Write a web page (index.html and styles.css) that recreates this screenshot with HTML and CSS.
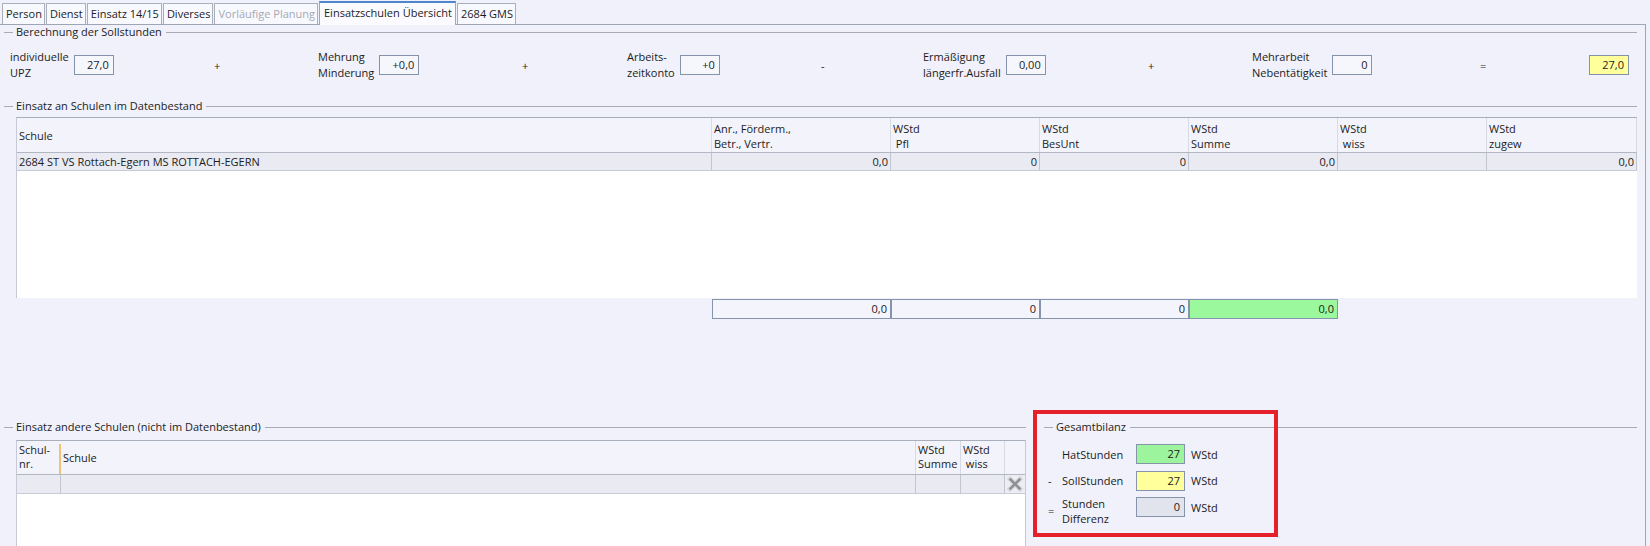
FILE: index.html
```html
<!DOCTYPE html>
<html lang="de">
<head>
<meta charset="utf-8">
<title>Einsatzschulen Übersicht</title>
<link rel="stylesheet" href="styles.css">
</head>
<body>
<div class="app">
  <div class="tabs">
    <div class="tab">Person</div>
    <div class="tab">Dienst</div>
    <div class="tab">Einsatz 14/15</div>
    <div class="tab">Diverses</div>
    <div class="tab disabled">Vorläufige Planung</div>
    <div class="tab active">Einsatzschulen Übersicht</div>
    <div class="tab">2684 GMS</div>
  </div>
  <div class="pane">
    <section class="group">
      <div class="legend"><span>Berechnung der Sollstunden</span></div>
      <div class="calc-row">
        <div class="term"><label>individuelle<br>UPZ</label><div class="field">27,0</div></div>
        <div class="op">+</div>
        <div class="term"><label>Mehrung<br>Minderung</label><div class="field">+0,0</div></div>
        <div class="op">+</div>
        <div class="term"><label>Arbeits-<br>zeitkonto</label><div class="field">+0</div></div>
        <div class="op">-</div>
        <div class="term"><label>Ermäßigung<br>längerfr.Ausfall</label><div class="field">0,00</div></div>
        <div class="op">+</div>
        <div class="term"><label>Mehrarbeit<br>Nebentätigkeit</label><div class="field">0</div></div>
        <div class="op">=</div>
        <div class="field yellow">27,0</div>
      </div>
    </section>

    <section class="group">
      <div class="legend"><span>Einsatz an Schulen im Datenbestand</span></div>
      <div class="table1">
        <div class="t1-head">
          <div class="mid">Schule</div>
          <div>Anr., Förderm.,<br>Betr., Vertr.</div>
          <div>WStd<br>&nbsp;Pfl</div>
          <div>WStd<br>BesUnt</div>
          <div>WStd<br>Summe</div>
          <div>WStd<br>&nbsp;wiss</div>
          <div>WStd<br>zugew</div>
        </div>
        <div class="t1-row">
          <div class="txt">2684 ST VS Rottach-Egern MS ROTTACH-EGERN</div>
          <div>0,0</div>
          <div>0</div>
          <div>0</div>
          <div>0,0</div>
          <div></div>
          <div>0,0</div>
        </div>
      </div>
      <div class="totals">
        <div class="blank"></div>
        <div class="tbox">0,0</div>
        <div class="tbox">0</div>
        <div class="tbox">0</div>
        <div class="tbox green">0,0</div>
      </div>
    </section>

    <div class="bottom">
      <section class="group other">
        <div class="legend"><span>Einsatz andere Schulen (nicht im Datenbestand)</span></div>
        <div class="table2">
          <div class="t2-head">
            <div>Schul-<br>nr.</div>
            <div class="divider"></div>
            <div class="mid">Schule</div>
            <div>WStd<br>Summe</div>
            <div>WStd<br>&nbsp;wiss</div>
            <div></div>
          </div>
          <div class="t2-row">
            <div></div>
            <div></div>
            <div></div>
            <div></div>
            <div class="del">
              <svg width="16" height="16" viewBox="0 0 16 16" aria-hidden="true">
                <path d="M3 3 L13 13 M13 3 L3 13" stroke="#d9dadf" stroke-width="5" stroke-linecap="square"/>
                <path d="M3.5 3.5 L12.5 12.5 M12.5 3.5 L3.5 12.5" stroke="#8f9095" stroke-width="2.6" stroke-linecap="square"/>
              </svg>
            </div>
          </div>
        </div>
      </section>

      <section class="group bilanz">
        <div class="legend"><span>Gesamtbilanz</span></div>
        <div class="bilanz-grid">
          <div class="bop"></div>
          <div class="blabel">HatStunden</div>
          <div class="bfield green">27</div>
          <div class="unit">WStd</div>

          <div class="bop">-</div>
          <div class="blabel">SollStunden</div>
          <div class="bfield yellow">27</div>
          <div class="unit">WStd</div>

          <div class="bop eq">=</div>
          <div class="blabel two">Stunden<br>Differenz</div>
          <div class="bfield grey">0</div>
          <div class="unit">WStd</div>
        </div>
      </section>
    </div>
  </div>
  <div class="highlight"></div>
</div>
</body>
</html>
```

FILE: styles.css
```css
* { box-sizing: border-box; }

html, body {
  margin: 0;
  height: 546px;
  overflow: hidden;
}

body {
  background: #f0f1fa;
  font-family: "Open Sans", "Noto Sans", "DejaVu Sans", sans-serif;
  font-size: 11px;
  color: #1c1c1c;
}

.app {
  position: relative;
  width: 1650px;
  height: 546px;
}

/* Tabs */
.tabs {
  display: flex;
  align-items: flex-end;
  gap: 1px;
  height: 24px;
  padding: 0 0 0 2px;
}

.tab {
  height: 21px;
  padding: 0 2px 0 3px;
  border: 1px solid #a9aebb;
  border-bottom: none;
  background: #f8f9fe;
  line-height: 19px;
  white-space: nowrap;
}

.tab.disabled { color: #a6a8b2; }

.tab.active {
  height: 24px;
  margin-bottom: -1px;
  padding: 0 3px 0 4px;
  background: #fbfbff;
  border-color: #9ca7bd;
  border-top: 2px solid #4f86cb;
  line-height: 20px;
  position: relative;
}

/* Pane */
.pane {
  width: 1646px;
  height: 522px;
  border-top: 1px solid #9ea6b6;
  border-right: 1px solid #9ea6b6;
  padding-right: 8px;
}

.legend {
  display: flex;
  align-items: center;
  height: 14px;
  line-height: 14px;
  padding-left: 4px;
  white-space: nowrap;
}

.legend::before {
  content: "";
  width: 9px;
  border-top: 1px solid #a6abb7;
  margin-right: 3px;
}

.legend::after {
  content: "";
  flex: 1;
  border-top: 1px solid #a6abb7;
  margin-left: 4px;
}

/* Berechnung */
.calc-row {
  display: grid;
  grid-template-columns: 206px 102px 206px 103px 196px 100px 227px 102px 230px 107px 40px;
  align-items: center;
  height: 36px;
  margin: 8px 0 16px;
  padding-left: 10px;
}

.term {
  display: flex;
  align-items: center;
  gap: 5px;
}

.term label { line-height: 16px; }

.op { margin-left: -2px; }

.field {
  width: 40px;
  height: 20px;
  border: 1px solid #8493a9;
  background: #f6f7fd;
  text-align: right;
  padding-right: 4px;
  line-height: 18px;
}

.field.yellow { background: #ffff9b; }

/* Table 1 */
.table1 {
  margin: 4px 0 0 16px;
  height: 181px;
  background: #ffffff;
  border-left: 1px solid #c6cad6;
  border-top: 1px solid #a9aebb;
}

.t1-head, .t1-row, .totals {
  display: grid;
  grid-template-columns: 695px 179px 149px 149px 149px 149px 1fr;
}

.t1-head {
  height: 34px;
  background: #f2f3fb;
}

.t1-head > div {
  padding: 3px 2px 0;
  line-height: 15px;
  border-right: 1px solid #d7dae3;
}

.t1-head > .mid {
  display: flex;
  align-items: center;
  padding-top: 0;
}

.t1-row {
  height: 19px;
  background: #e9eaf2;
  border-top: 1px solid #b3b7c3;
  border-bottom: 1px solid #c7cbd5;
}

.t1-row > div {
  border-right: 1px solid #c1c5cf;
  text-align: right;
  padding-right: 2px;
  line-height: 17px;
}

.t1-row > .txt {
  text-align: left;
  padding-left: 2px;
}

.totals {
  grid-template-columns: 696px 179px 149px 149px 149px;
  height: 20px;
  margin: 1px 0 0 16px;
}

.tbox {
  border: 1px solid #8594aa;
  background: #f3f4fc;
  text-align: right;
  padding-right: 3px;
  line-height: 18px;
}

.tbox.green { background: #9cf89c; }

/* Bottom */
.bottom {
  display: flex;
  margin-top: 101px;
}

.other { width: 1026px; }

.bilanz {
  flex: 1;
  margin-left: 14px;
}

.table2 {
  margin: 6px 0 0 16px;
  height: 120px;
  background: #ffffff;
  border-left: 1px solid #c6cad6;
  border-top: 1px solid #a9aebb;
  border-right: 1px solid #c6cad6;
}

.t2-head, .t2-row {
  display: grid;
  grid-template-columns: 42px 2px 855px 45px 44px 1fr;
}

.t2-row {
  grid-template-columns: 44px 855px 45px 44px 1fr;
}

.t2-head {
  height: 33px;
  background: #f2f3fb;
}

.t2-head > div {
  padding: 2px 2px 0;
  line-height: 14px;
  border-right: 1px solid #d7dae3;
}

.t2-head > div:first-child { border-right: none; }

.t2-head > div:last-child { border-right: none; }

.t2-head > .divider {
  padding: 0;
  margin-top: 3px;
  background: #f0c377;
  border: none;
}

.t2-head > .mid {
  display: flex;
  align-items: center;
  padding-top: 0;
}

.t2-row {
  height: 20px;
  background: #e9eaf2;
  border-top: 1px solid #b3b7c3;
  border-bottom: 1px solid #c7cbd5;
}

.t2-row > div { border-right: 1px solid #c1c5cf; }

.t2-row > .del {
  border-right: none;
  display: flex;
  align-items: center;
  justify-content: center;
  background: #eceef4;
}

/* Gesamtbilanz */
.bilanz-grid {
  display: grid;
  grid-template-columns: 16px 74px 49px auto;
  grid-auto-rows: 20px;
  row-gap: 6.5px;
  align-items: center;
  margin-top: 10px;
  padding-left: 6px;
}

.bop { padding-left: 2px; }

.bop.eq { padding-top: 6px; }

.blabel { white-space: nowrap; }

.blabel.two {
  line-height: 15px;
  padding-top: 7px;
}

.bfield {
  height: 20px;
  border: 1px solid #8594aa;
  text-align: right;
  padding-right: 4px;
  line-height: 18px;
}

.bfield.green { background: #9cf59c; }
.bfield.yellow { background: #ffff9b; }
.bfield.grey { background: #e2e4ed; }

.unit { padding-left: 6px; }

/* Annotation overlay */
.highlight {
  position: absolute;
  left: 1033px;
  top: 410px;
  width: 245px;
  height: 127px;
  border: 4px solid #e5202b;
  pointer-events: none;
}
```
